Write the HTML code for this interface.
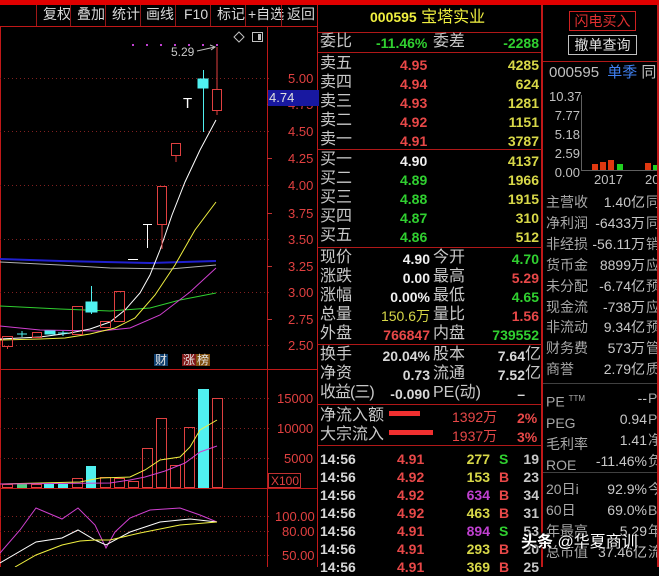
<!DOCTYPE html>
<html><head><meta charset="utf-8"><style>
*{margin:0;padding:0}
body{width:659px;height:567px;background:#000;position:relative;overflow:hidden;font-family:"Liberation Sans","Noto Sans CJK SC",sans-serif}
div{position:absolute;white-space:nowrap;line-height:1}
.l{font-size:16px;color:#c8c8c8}
.n{font-size:14px;font-weight:bold}
.r{color:#e84848}.g{color:#30d030}.y{color:#d8d848}.w{color:#f0f0f0}.p{color:#c040d0}
.ax{font-size:13px;color:#e04040;left:288px}
.tb{top:7px;font-size:14px;color:#d8d8d8}
.rl{font-size:14px;color:#a8a8a8;left:546px}
.rv{font-size:13px;color:#c8c8c8}
.hl{height:1px;background:#b01818}
</style></head><body>
<div style="left:0;top:0;width:659px;height:5px;background:#e00000"></div>
<div class="hl" style="left:0;top:26px;width:318px;background:#c01818"></div>
<div style="left:36px;top:5px;width:1px;height:21px;background:#a01818"></div>
<div class="tb" style="left:43px">复权</div><div class="tb" style="left:77px">叠加</div><div class="tb" style="left:112px">统计</div><div class="tb" style="left:146px">画线</div><div class="tb" style="left:184px">F10</div><div class="tb" style="left:217px">标记</div><div class="tb" style="left:248px">+自选</div><div class="tb" style="left:287px">返回</div>
<svg style="position:absolute;left:0;top:0" width="318" height="567">
<g stroke="#901818" stroke-width="1">
<line x1="70.5" y1="5" x2="70.5" y2="26"/><line x1="105.5" y1="5" x2="105.5" y2="26"/><line x1="140.5" y1="5" x2="140.5" y2="26"/><line x1="175.5" y1="5" x2="175.5" y2="26"/><line x1="210.5" y1="5" x2="210.5" y2="26"/><line x1="245.5" y1="5" x2="245.5" y2="26"/><line x1="281.5" y1="5" x2="281.5" y2="26"/>
</g>
<line x1="0.5" y1="26" x2="0.5" y2="567" stroke="#c01818"/>
<line x1="267.5" y1="27" x2="267.5" y2="567" stroke="#c01818"/>
<line x1="317.5" y1="5" x2="317.5" y2="567" stroke="#c01818"/>
<line x1="0" y1="369.5" x2="318" y2="369.5" stroke="#c01818"/>
<line x1="0" y1="488.5" x2="318" y2="488.5" stroke="#c01818"/>
<g stroke="#802020" stroke-dasharray="1,3">
<line x1="0" y1="78.5" x2="272" y2="78.5"/><line x1="0" y1="131.5" x2="272" y2="131.5"/><line x1="0" y1="185.5" x2="272" y2="185.5"/><line x1="0" y1="239.5" x2="272" y2="239.5"/><line x1="0" y1="292.5" x2="272" y2="292.5"/><line x1="0" y1="345.5" x2="272" y2="345.5"/>
<line x1="0" y1="398.5" x2="272" y2="398.5"/><line x1="0" y1="428.5" x2="272" y2="428.5"/><line x1="0" y1="458.5" x2="272" y2="458.5"/>
<line x1="0" y1="516.5" x2="272" y2="516.5"/><line x1="0" y1="531.5" x2="272" y2="531.5"/><line x1="0" y1="555.5" x2="272" y2="555.5"/>
</g>
<g stroke="#c03030"><line x1="267" y1="104.5" x2="272" y2="104.5"/><line x1="267" y1="158.5" x2="272" y2="158.5"/><line x1="267" y1="213.5" x2="272" y2="213.5"/><line x1="267" y1="266.5" x2="272" y2="266.5"/><line x1="267" y1="319.5" x2="272" y2="319.5"/></g>
<polyline fill="none" stroke="#2020d0" stroke-width="2" points="0,259 60,261 150,263 216,261"/>
<polyline fill="none" stroke="#b0b0b0" points="0,262 60,265 110,268 170,269 216,265"/>
<polyline fill="none" stroke="#30d030" points="0,306 60,309 110,311 150,308 180,300 216,293"/>
<polyline fill="none" stroke="#d040d0" points="0,326 40,330 100,331 130,328 160,315 190,292 216,268"/>
<polyline fill="none" stroke="#f0f040" points="0,340 40,339 65,338 90,334 115,328 135,318 155,295 175,265 195,230 216,202"/>
<polyline fill="none" stroke="#ffffff" points="0,339 40,337 70,333 90,329 110,322 125,310 140,293 150,275 160,250 172,215 185,182 200,150 216,120"/>
<g fill="none" stroke="#e04040">
<rect x="2.5" y="336.5" width="10" height="10"/><line x1="7.5" y1="346" x2="7.5" y2="349"/>
<rect x="32.5" y="332.5" width="9" height="5"/>
<rect x="72.5" y="306.5" width="10" height="28"/>
<rect x="100.5" y="321.5" width="10" height="6"/>
<rect x="114.5" y="291.5" width="10" height="30"/>
<rect x="157.5" y="186.5" width="9" height="38"/><line x1="162" y1="224" x2="162" y2="249"/>
<rect x="171.5" y="143.5" width="9" height="12"/><line x1="176" y1="155" x2="176" y2="162"/>
<rect x="212.5" y="89.5" width="9" height="21"/><line x1="217" y1="47" x2="217" y2="89"/><line x1="217" y1="110" x2="217" y2="115"/>
</g>
<g stroke="#50f0f0" fill="#50f0f0">
<line x1="17" y1="334" x2="27" y2="334"/><line x1="22" y1="331" x2="22" y2="337"/>
<rect x="45" y="331" width="10" height="3"/>
<line x1="58" y1="333" x2="68" y2="333"/><line x1="63" y1="331" x2="63" y2="336"/>
<rect x="86" y="302" width="11" height="10"/><line x1="91.5" y1="286" x2="91.5" y2="314"/>
<rect x="198" y="79" width="10" height="9"/><line x1="203.5" y1="70" x2="203.5" y2="132"/>
</g>
<g stroke="#fff"><line x1="128" y1="259.5" x2="138" y2="259.5"/><line x1="143" y1="224.5" x2="152" y2="224.5"/><line x1="147.5" y1="224" x2="147.5" y2="248"/></g>
<g fill="#c040d0"><rect x="132" y="44" width="2" height="2"/><rect x="146" y="44" width="2" height="2"/><rect x="160" y="44" width="2" height="2"/><rect x="174" y="44" width="2" height="2"/><rect x="188" y="44" width="2" height="2"/><rect x="202" y="44" width="2" height="2"/><rect x="216" y="44" width="2" height="2"/></g>
<polyline fill="none" stroke="#c0c0c0" points="197,51 215,47"/><polyline fill="none" stroke="#c0c0c0" points="210,45 215,47 211,50"/>
<path d="M239 32 L244 37 L239 42 L234 37 Z" fill="none" stroke="#c0c0c0"/>
<rect x="252.5" y="32.5" width="10" height="9" fill="none" stroke="#c0c0c0"/><rect x="258" y="34" width="3" height="6" fill="#c0c0c0"/>
<g fill="none" stroke="#e04040">
<rect x="2.5" y="484.5" width="10" height="3"/><rect x="31.5" y="484.5" width="10" height="3"/><rect x="72.5" y="478.5" width="10" height="9"/><rect x="100.5" y="477.5" width="10" height="10"/><rect x="114.5" y="478.5" width="10" height="9"/><rect x="128.5" y="481.5" width="10" height="6"/><rect x="142.5" y="448.5" width="10" height="39"/><rect x="156.5" y="418.5" width="10" height="69"/><rect x="170.5" y="465.5" width="10" height="22"/><rect x="184.5" y="427.5" width="10" height="60"/><rect x="212.5" y="398.5" width="10" height="89"/>
</g>
<rect x="17" y="484" width="10" height="4" fill="#50d080"/>
<g fill="#50f0f0"><rect x="44" y="484" width="10" height="4"/><rect x="58" y="484" width="10" height="4"/><rect x="86" y="466" width="10" height="22"/><rect x="198" y="389" width="11" height="99"/></g>
<polyline fill="none" stroke="#f0f040" points="0,484 80,482 100,478 130,477 145,470 160,460 180,457 190,447 200,430 217,420"/>
<polyline fill="none" stroke="#d040d0" points="0,484 110,483 130,480 145,477 165,471 185,463 200,452 217,446"/>
<rect x="268.5" y="473.5" width="32" height="14" fill="none" stroke="#c03030"/>
<polyline fill="none" stroke="#d040d0" points="0,553 20,530 36,508 62,519 78,508 95,525 106,548 115,532 130,518 150,510 180,508 200,515 217,522"/>
<polyline fill="none" stroke="#fff" points="0,563 36,542 62,538 78,530 95,540 106,545 130,532 160,522 190,519 217,522"/>
<polyline fill="none" stroke="#f0f040" points="15,567 36,555 62,545 80,541 95,540 110,540 140,533 180,525 217,522"/>
</svg>
<div style="left:171px;top:46px;font-size:12px;color:#c8c8c8">5.29</div>
<div style="left:183px;top:96px;font-size:15px;color:#fff">T</div>
<div class="ax" style="top:72px">5.00</div><div class="ax" style="top:98px">4.75</div><div class="ax" style="top:125px">4.50</div><div class="ax" style="top:152px">4.25</div><div class="ax" style="top:179px">4.00</div><div class="ax" style="top:207px">3.75</div><div class="ax" style="top:233px">3.50</div><div class="ax" style="top:260px">3.25</div><div class="ax" style="top:286px">3.00</div><div class="ax" style="top:313px">2.75</div><div class="ax" style="top:339px">2.50</div>
<div style="left:268px;top:90px;width:50px;height:16px;background:#1818a0;color:#e0e0e0;font-size:13px;line-height:16px;padding-left:1px">4.74</div>
<div class="ax" style="top:392px;left:277px">15000</div><div class="ax" style="top:422px;left:277px">10000</div><div class="ax" style="top:452px;left:284px">5000</div>
<div style="left:271px;top:475px;font-size:12px;color:#e04040">X100</div>
<div class="ax" style="top:510px;left:275px">100.00</div><div class="ax" style="top:525px;left:282px">80.00</div><div class="ax" style="top:549px;left:282px">50.00</div>
<div style="left:154px;top:354px;font-size:12px;color:#e0e0e0;background:#104070;padding:0 1px">财</div>
<div style="left:182px;top:354px;font-size:12px;color:#e0e0e0;background:#801818;padding:0 1px">涨</div>
<div style="left:196px;top:354px;font-size:12px;color:#e0e0e0;background:#805010;padding:0 1px">榜</div>

<div style="left:318px;top:5px;width:225px;height:562px;border-right:2px solid #c01818;box-sizing:border-box"></div>
<div style="left:370px;top:10px;font-size:16px;color:#f0f040"><b style="font-size:14px">000595</b> 宝塔实业</div>
<div class="hl" style="left:318px;top:32px;width:224px"></div>
<div class="l" style="left:320px;top:34px">委比</div><div class="n g" style="left:376px;top:36px">-11.46%</div><div class="l" style="left:433px;top:34px">委差</div><div class="n g" style="left:497px;top:36px;width:42px;text-align:right">-2288</div>
<div class="hl" style="left:318px;top:52px;width:224px"></div>
<div class="l" style="left:320px;top:54px;line-height:19px">卖五<br>卖四<br>卖三<br>卖二<br>卖一</div>
<div class="n r" style="left:400px;top:56px;line-height:19px">4.95<br>4.94<br>4.93<br>4.92<br>4.91</div>
<div class="n y" style="left:490px;top:56px;width:49px;text-align:right;line-height:19px">4285<br>624<br>1281<br>1151<br>3787</div>
<div class="hl" style="left:318px;top:149px;width:224px"></div>
<div class="l" style="left:320px;top:150px;line-height:19px">买一<br>买二<br>买三<br>买四<br>买五</div>
<div class="n g" style="left:400px;top:152px;line-height:19px"><span class="w">4.90</span><br>4.89<br>4.88<br>4.87<br>4.86</div>
<div class="n y" style="left:490px;top:152px;width:49px;text-align:right;line-height:19px">4137<br>1966<br>1915<br>310<br>512</div>
<div class="hl" style="left:318px;top:247px;width:224px"></div>
<div class="l" style="left:320px;top:248px;line-height:19px">现价<br>涨跌<br>涨幅<br>总量<br>外盘</div>
<div class="n w" style="left:356px;top:250px;width:74px;text-align:right;line-height:19px">4.90<br>0.00<br>0.00%<br><span class="y" style="font-weight:normal">150.6万</span><br><span class="r">766847</span></div>
<div class="l" style="left:433px;top:248px;line-height:19px">今开<br>最高<br>最低<br>量比<br>内盘</div>
<div class="n" style="left:480px;top:250px;width:59px;text-align:right;line-height:19px"><span class="g">4.70</span><br><span class="r">5.29</span><br><span class="g">4.65</span><br><span class="r">1.56</span><br><span class="g">739552</span></div>
<div class="hl" style="left:318px;top:344px;width:224px"></div>
<div class="l" style="left:320px;top:345px;line-height:19px">换手<br>净资<br><span style="letter-spacing:-1px">收益(三)</span></div>
<div class="n" style="left:356px;top:347px;width:74px;text-align:right;line-height:19px;color:#d8d8d8">20.04%<br>0.73<br>-0.090</div>
<div class="l" style="left:433px;top:345px;line-height:19px">股本<br>流通<br>PE(动)</div>
<div class="n" style="left:480px;top:347px;width:45px;text-align:right;line-height:19px;color:#d8d8d8">7.64<br>7.52<br>–</div>
<div class="l" style="left:525px;top:345px;line-height:19px">亿<br>亿</div>
<div class="hl" style="left:318px;top:404px;width:224px"></div>
<div class="l" style="left:320px;top:406px;line-height:19px">净流入额<br>大宗流入</div>
<div style="left:389px;top:411px;width:31px;height:5px;background:#f03030"></div>
<div style="left:389px;top:430px;width:44px;height:5px;background:#f03030"></div>
<div class="r" style="left:452px;top:408px;font-size:14px;line-height:19px">1392万<br>1937万</div>
<div class="n r" style="left:517px;top:409px;line-height:19px">2%<br>3%</div>
<div class="hl" style="left:318px;top:445px;width:224px"></div>
<div class="n" style="left:320px;top:450px;line-height:18px;color:#d8d8d8">14:56<br>14:56<br>14:56<br>14:56<br>14:56<br>14:56<br>14:56</div>
<div class="n r" style="left:397px;top:450px;line-height:18px">4.91<br>4.92<br>4.92<br>4.92<br>4.91<br>4.91<br>4.91</div>
<div class="n" style="left:455px;top:450px;width:35px;text-align:right;line-height:18px"><span class="y">277</span><br><span class="y">153</span><br><span class="p">634</span><br><span class="y">463</span><br><span class="p">894</span><br><span class="y">293</span><br><span class="y">369</span></div>
<div class="n" style="left:499px;top:450px;line-height:18px"><span class="g">S</span><br><span class="r">B</span><br><span class="r">B</span><br><span class="r">B</span><br><span class="g">S</span><br><span class="r">B</span><br><span class="r">B</span></div>
<div class="n" style="left:518px;top:450px;width:21px;text-align:right;line-height:18px;color:#c8c8c8">19<br>23<br>34<br>31<br>53<br>20<br>25</div>

<div style="left:569px;top:11px;width:67px;height:20px;border:1px solid #d02020;box-sizing:border-box;color:#e03030;font-size:14px;line-height:18px;text-align:center">闪电买入</div>
<div style="left:568px;top:35px;width:69px;height:20px;border:1px solid #c0c0c0;box-sizing:border-box;color:#e0e0e0;font-size:14px;line-height:18px;text-align:center">撤单查询</div>
<div class="hl" style="left:543px;top:61px;width:116px"></div>
<div style="left:549px;top:65px;font-size:15px;color:#c0c0c0">000595 <span style="color:#4080f0;margin-left:4px">单季</span> 同</div>
<div style="left:549px;top:87px;font-size:13px;color:#c0c0c0;line-height:19px;text-align:right;width:31px">10.37<br>7.77<br>5.18<br>2.59<br>0.00</div>
<div style="left:581px;top:95px;width:1px;height:76px;background:#606060"></div>
<div style="left:581px;top:170px;width:78px;height:1px;background:#606060"></div>
<div style="left:592px;top:164px;width:6px;height:6px;background:#e03810"></div>
<div style="left:600px;top:162px;width:6px;height:8px;background:#e03810"></div>
<div style="left:608px;top:160px;width:6px;height:10px;background:#e03810"></div>
<div style="left:617px;top:164px;width:6px;height:6px;background:#20d020"></div>
<div style="left:645px;top:163px;width:6px;height:7px;background:#e03810"></div>
<div style="left:653px;top:165px;width:6px;height:5px;background:#20d020"></div>
<div style="left:594px;top:173px;font-size:13px;color:#c0c0c0">2017</div><div style="left:645px;top:173px;font-size:13px;color:#c0c0c0">20</div>
<div class="rl" style="top:192px;line-height:20.9px">主营收<br>净利润<br>非经损<br>货币金<br>未分配<br>现金流<br>非流动<br>财务费<br>商誉</div>
<div class="rv" style="left:588px;top:192px;line-height:20.9px;width:57px;text-align:right;font-size:14px">1.40亿<br>-6433万<br>-56.11万<br>8899万<br>-6.74亿<br>-738万<br>9.34亿<br>573万<br>2.79亿</div>
<div class="rl" style="left:646px;top:192px;line-height:20.9px">同<br>同<br>销<br>应<br>预<br>应<br>预<br>管<br>质</div>
<div class="hl" style="left:543px;top:383px;width:116px;background:#404040"></div>
<div class="rl" style="top:388px;line-height:21px">PE <sup style="font-size:8px">TTM</sup><br>PEG<br>毛利率<br>ROE</div>
<div class="rv" style="left:588px;top:388px;line-height:21px;width:59px;text-align:right;font-size:14px">--<br>0.94<br>1.41<br>-11.46%</div>
<div class="rl" style="left:648px;top:388px;line-height:21px">P<br>P<br>净<br>负</div>
<div class="hl" style="left:543px;top:472px;width:116px;background:#404040"></div>
<div class="rl" style="top:479px;line-height:21px">20日i<br>60日<br>年最高<br>总市值</div>
<div class="rv" style="left:588px;top:479px;line-height:21px;width:59px;text-align:right;font-size:14px">92.9%<br>69.0%<br>5.29<br>37.46亿</div>
<div class="rl" style="left:648px;top:479px;line-height:21px">今<br>B<br>年<br>流</div>
<div style="left:521px;top:535px;font-size:16px;color:#fff;text-shadow:1px 1px 2px #000,-1px -1px 2px #000;font-weight:bold">头条 <span style="font-weight:normal">@华夏商训</span></div>
<div style="left:657px;top:5px;width:2px;height:562px;background:#c01818"></div>
</body></html>
